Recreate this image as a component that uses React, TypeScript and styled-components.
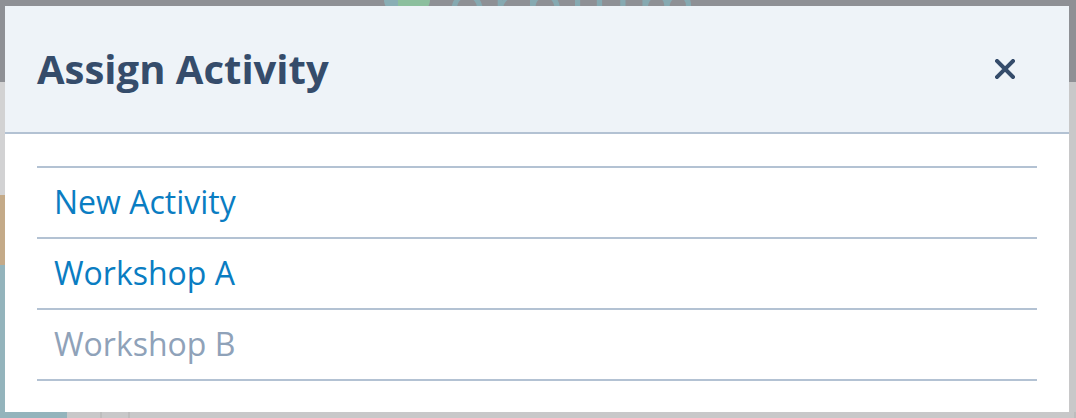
import React from 'react';
import styled, { createGlobalStyle } from 'styled-components';

const GlobalStyle = createGlobalStyle`
  html, body {
    margin: 0;
    padding: 0;
  }
  body {
    font-family: 'Open Sans', 'DejaVu Sans', sans-serif;
    background: #c8c8c9;
  }
`;

const Page = styled.div`
  position: relative;
  width: 1076px;
  height: 418px;
  overflow: hidden;
  display: flex;
  flex-direction: column;
  background: #c8c8c9;
`;

const TopBar = styled.div`
  height: 82px;
  background: #8e9095;
  display: flex;
  justify-content: center;
  align-items: flex-start;
  gap: 18px;
  padding-left: 10px;
  overflow: hidden;
`;

const LogoMark = styled.div`
  width: 46px;
  height: 46px;
  margin-top: -34px;
  border-radius: 12px;
  background: linear-gradient(90deg, #89aeb5 0 30%, #8cbf9e 30% 100%);
`;

const LogoText = styled.div`
  margin-top: -40px;
  font-family: 'Open Sans', sans-serif;
  font-size: 64px;
  letter-spacing: 6px;
  color: #86a9b1;
`;

const Content = styled.div`
  flex: 1;
  display: flex;
`;

const Sidebar = styled.div`
  width: 67px;
  display: flex;
  flex-direction: column;
`;

const SideBlock = styled.div<{ $color: string; $height?: number }>`
  background: ${(p) => p.$color};
  height: ${(p) => (p.$height ? `${p.$height}px` : 'auto')};
  flex: ${(p) => (p.$height ? 'none' : '1')};
`;

const Footer = styled.div`
  flex: 1;
  display: flex;
  align-items: flex-end;
`;

const Cell = styled.div<{ $width?: number }>`
  height: 6px;
  width: ${(p) => (p.$width ? `${p.$width}px` : 'auto')};
  flex: ${(p) => (p.$width ? 'none' : '1')};
  border-right: 2px solid #bdbdbd;
  background: #c8c8c9;
`;

// modal sits over the app, so it's the one absolute thing here
const Modal = styled.div`
  position: absolute;
  top: 6px;
  left: 5px;
  width: 1064px;
  height: 406px;
  background: #ffffff;
  display: flex;
  flex-direction: column;
`;

const Header = styled.div`
  height: 126px;
  flex: none;
  background: #eef3f8;
  border-bottom: 2px solid #b3c2d3;
  display: flex;
  align-items: center;
  justify-content: space-between;
  padding: 0 54px 0 32px;
`;

const Title = styled.h1`
  margin: 0 0 2px;
  font-size: 40px;
  font-weight: 700;
  color: #354c6b;
`;

const CloseButton = styled.button`
  border: none;
  background: none;
  padding: 0;
  width: 20px;
  height: 20px;
  display: flex;
  cursor: pointer;
`;

const List = styled.ul`
  list-style: none;
  margin: 32px 32px 0;
  padding: 0;
  border-bottom: 2px solid #b3c2d3;
`;

const Item = styled.li<{ $disabled?: boolean }>`
  box-sizing: border-box;
  height: 71px;
  border-top: 2px solid #b3c2d3;
  display: flex;
  align-items: center;
  padding: 0 0 3px 17px;
  font-size: 32px;
  color: ${(p) => (p.$disabled ? '#8fa2b9' : '#0a7dc2')};
  cursor: ${(p) => (p.$disabled ? 'default' : 'pointer')};
`;

const items = [
  { label: 'New Activity' },
  { label: 'Workshop A' },
  { label: 'Workshop B', disabled: true },
];

export default function App() {
  return (
    <>
      <GlobalStyle />
      <Page>
        <TopBar>
          <LogoMark />
          <LogoText>orbium</LogoText>
        </TopBar>
        <Content>
          <Sidebar>
            <SideBlock $color="#d2d2d3" $height={113} />
            <SideBlock $color="#c4aa88" $height={70} />
            <SideBlock $color="#94b4bc" />
          </Sidebar>
          <Footer>
            <Cell $width={33} />
            <Cell $width={26} />
            <Cell />
          </Footer>
        </Content>
        <Modal>
          <Header>
            <Title>Assign Activity</Title>
            <CloseButton aria-label="Close">
              <svg width="20" height="20" viewBox="0 0 20 20">
                <path d="M2 2L18 18M18 2L2 18" stroke="#354c6b" strokeWidth="4" strokeLinecap="square" />
              </svg>
            </CloseButton>
          </Header>
          <List>
            {items.map((it) => (
              <Item key={it.label} $disabled={it.disabled}>
                {it.label}
              </Item>
            ))}
          </List>
        </Modal>
      </Page>
    </>
  );
}
